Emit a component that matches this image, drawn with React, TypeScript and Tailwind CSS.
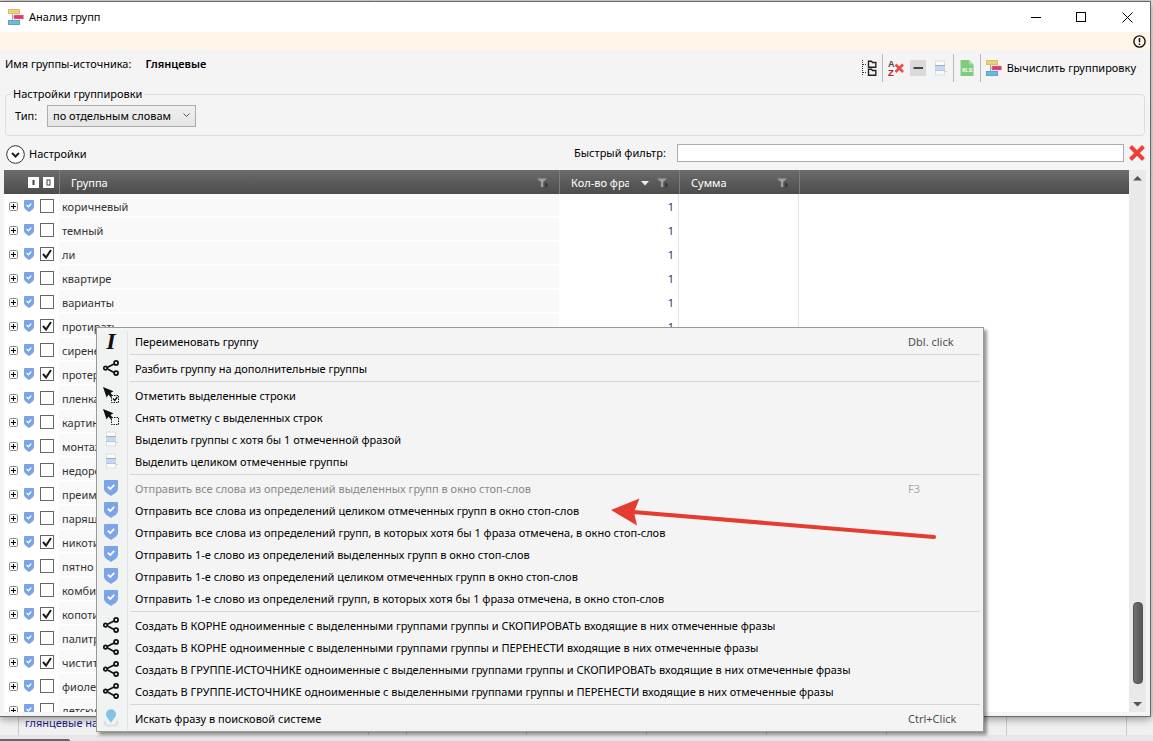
import { useState } from 'react';
import type { ReactNode } from 'react';

interface Group {
  name: string;
  checked?: boolean;
}

interface MenuEntry {
  icon: ReactNode;
  label: string;
  shortcut?: string;
  disabled?: boolean;
}

const groups: Group[] = [
  { name: 'коричневый' },
  { name: 'темный' },
  { name: 'ли', checked: true },
  { name: 'квартире' },
  { name: 'варианты' },
  { name: 'протирать', checked: true },
  { name: 'сиреневый' },
  { name: 'протереть', checked: true },
  { name: 'пленка' },
  { name: 'картинки' },
  { name: 'монтаж' },
  { name: 'недорого' },
  { name: 'преимущества' },
  { name: 'парящие' },
  { name: 'никотина', checked: true },
  { name: 'пятно' },
  { name: 'комбинированные' },
  { name: 'копоти', checked: true },
  { name: 'палитра' },
  { name: 'чистить', checked: true },
  { name: 'фиолетовый' },
  { name: 'детскую' },
];

function GroupingIcon() {
  return (
    <svg width="16" height="16" viewBox="0 0 16 16" aria-hidden="true">
      <path d="M4.500 4v8M4.500 8H8" stroke="#a9a9a9" fill="none" />
      <rect x="0.500" y="0.500" width="11" height="4" fill="#e8d37c" stroke="#d9c067" />
      <rect x="6" y="6" width="9.500" height="4" fill="#e8336f" stroke="#b9a0aa" strokeWidth="0.500" />
      <rect x="0.500" y="11.500" width="11" height="4" fill="#6cb9d8" stroke="#5aa6c6" />
    </svg>
  );
}

function ShieldIcon({ className = 'w-[14px] h-4' }: { className?: string }) {
  return (
    <svg className={className} viewBox="0 0 14 16" preserveAspectRatio="none" aria-hidden="true">
      <path d="M1 0h12q1 0 1 1v7.500C14 12 10.500 13.500 7 16 3.500 13.500 0 12 0 8.500V1Q0 0 1 0Z" fill="#7ba5e8" />
      <path d="M3.800 6.800 6.300 9 10.200 4.800" stroke="#fff" strokeWidth="1.800" fill="none" />
    </svg>
  );
}

function ShareIcon() {
  return (
    <svg width="16" height="16" viewBox="0 0 16 16" fill="none" stroke="#111" strokeWidth="1.700" aria-hidden="true">
      <path d="M4.600 7.200 11 4M4.600 9 11 12.400" />
      <circle cx="2.500" cy="8.100" r="1.700" />
      <circle cx="13.100" cy="2.900" r="2" />
      <circle cx="13.100" cy="13.100" r="2" />
    </svg>
  );
}

function PointerIcon({ check }: { check?: boolean }) {
  return (
    <svg width="16" height="16" viewBox="0 0 16 16" aria-hidden="true">
      <path d="M0 0 10.500 4.200 7.500 6 10 9 8 10.800 5.500 7.500 3.600 10.500Z" fill="#111" />
      <rect x="8.500" y="8.500" width="7" height="7" fill="#f4f4f4" stroke="#111" strokeDasharray="1.500 1" />
      {check && <path d="M10 11.500 11.800 13.500 14.300 10" stroke="#111" strokeWidth="1.300" fill="none" />}
    </svg>
  );
}

function RowsIcon() {
  return (
    <svg width="16" height="16" viewBox="0 0 16 16" aria-hidden="true">
      <rect x="3.500" y="1" width="9" height="14" fill="#fbfbfb" stroke="#dedede" />
      <rect x="3" y="5" width="10" height="6" fill="#c3d7f9" />
      <path d="M3 5.500h10" stroke="#a9a9b5" />
      <path d="M3 10.500h10" stroke="#b8c4dc" />
      <path d="M13 11.500h2" stroke="#cfcfcf" />
    </svg>
  );
}

function PinIcon() {
  return (
    <svg width="16" height="18" viewBox="0 0 16 18" aria-hidden="true">
      <path d="M3 12.500C0 14 1 16.800 8 16.800s8-2.800 5-4.300" stroke="#dcdfdf" strokeWidth="2" fill="none" />
      <path d="M8 14C6.500 10.500 3 8.500 3 5.200a5 5 0 0 1 10 0C13 8.500 9.500 10.500 8 14Z" fill="#82c2e6" />
    </svg>
  );
}

function TreeIcon() {
  return (
    <svg width="16" height="16" viewBox="0 0 16 16" fill="none" aria-hidden="true">
      <path d="M1.500 0v16" stroke="#333" strokeDasharray="1 1" />
      <path d="M2 4.500h4M2 12.500h4" stroke="#333" strokeDasharray="1 1" />
      <path d="M7.500 7.200V1.200h3l1 1.300h3.300v4.700ZM7.500 15.200V9.200h3l1 1.300h3.300v4.700Z" stroke="#222" strokeWidth="1.400" />
    </svg>
  );
}

function SortClearIcon() {
  return (
    <svg width="16" height="16" viewBox="0 0 16 16" aria-hidden="true">
      <text x="0" y="7" fontSize="9" fontWeight="700" fontFamily="Liberation Sans, sans-serif" fill="#444">A</text>
      <text x="0" y="15.500" fontSize="9.500" fontWeight="700" fontFamily="Liberation Sans, sans-serif" fill="#b3202a">Z</text>
      <path d="M7.500 4.500 15 12M15 4.500 7.500 12" stroke="#ee4b44" strokeWidth="2.600" />
    </svg>
  );
}

function CollapseIcon() {
  return (
    <svg width="16" height="16" viewBox="0 0 16 16" aria-hidden="true">
      <rect width="16" height="16" rx="1.500" fill="#dadada" />
      <path d="M3.500 8h9.500" stroke="#444" strokeWidth="2" />
    </svg>
  );
}

function XlsIcon() {
  return (
    <svg width="16" height="16" viewBox="0 0 16 16" aria-hidden="true">
      <path d="M1.500 0H10l4.500 4.500V16h-13Z" fill="#7fcc80" />
      <path d="M10 0v4.500h4.500Z" fill="#b2ddb3" />
      <text x="8" y="12" textAnchor="middle" fontSize="5.500" fontWeight="700" fontFamily="Liberation Sans, sans-serif" fill="#fff">XLS</text>
    </svg>
  );
}

function FilterIcon() {
  return (
    <svg width="12" height="11" viewBox="0 0 12 11" aria-hidden="true">
      <path d="M0 0.500h10L6.200 4v5H4V4Z" fill="#a0a0a0" />
      <path d="M8 3.500 11.500 7 8 10.500Z" fill="#3a3a3a" />
    </svg>
  );
}

const rename = (
  <span className="font-['Liberation_Serif',serif] text-[24px] leading-4 font-bold italic text-[#111]">I</span>
);

const sections: MenuEntry[][] = [
  [{ icon: rename, label: 'Переименовать группу', shortcut: 'Dbl. click' }],
  [{ icon: <ShareIcon />, label: 'Разбить группу на дополнительные группы' }],
  [
    { icon: <PointerIcon check />, label: 'Отметить выделенные строки' },
    { icon: <PointerIcon />, label: 'Снять отметку с выделенных строк' },
    { icon: <RowsIcon />, label: 'Выделить группы с хотя бы 1 отмеченной фразой' },
    { icon: <RowsIcon />, label: 'Выделить целиком отмеченные группы' },
  ],
  [
    { icon: <ShieldIcon />, label: 'Отправить все слова из определений выделенных групп в окно стоп-слов', shortcut: 'F3', disabled: true },
    { icon: <ShieldIcon />, label: 'Отправить все слова из определений целиком отмеченных групп в окно стоп-слов' },
    { icon: <ShieldIcon />, label: 'Отправить все слова из определений групп, в которых хотя бы 1 фраза отмечена, в окно стоп-слов' },
    { icon: <ShieldIcon />, label: 'Отправить 1-е слово из определений выделенных групп в окно стоп-слов' },
    { icon: <ShieldIcon />, label: 'Отправить 1-е слово из определений целиком отмеченных групп в окно стоп-слов' },
    { icon: <ShieldIcon />, label: 'Отправить 1-е слово из определений групп, в которых хотя бы 1 фраза отмечена, в окно стоп-слов' },
  ],
  [
    { icon: <ShareIcon />, label: 'Создать В КОРНЕ одноименные с выделенными группами группы и СКОПИРОВАТЬ входящие в них отмеченные фразы' },
    { icon: <ShareIcon />, label: 'Создать В КОРНЕ одноименные с выделенными группами группы и ПЕРЕНЕСТИ входящие в них отмеченные фразы' },
    { icon: <ShareIcon />, label: 'Создать В ГРУППЕ-ИСТОЧНИКЕ одноименные с выделенными группами группы и СКОПИРОВАТЬ входящие в них отмеченные фразы' },
    { icon: <ShareIcon />, label: 'Создать В ГРУППЕ-ИСТОЧНИКЕ одноименные с выделенными группами группы и ПЕРЕНЕСТИ входящие в них отмеченные фразы' },
  ],
  [{ icon: <PinIcon />, label: 'Искать фразу в поисковой системе', shortcut: 'Ctrl+Click' }],
];

function TitleBar() {
  return (
    <header className="flex h-[30px] shrink-0 items-center bg-white pl-2">
      <GroupingIcon />
      <h1 className="ml-[5px] flex-1">Анализ групп</h1>
      <button aria-label="Свернуть" className="grid h-full w-[45px] place-items-center">
        <svg width="11" height="11" stroke="#000"><path d="M0 5.500h10" /></svg>
      </button>
      <button aria-label="Развернуть" className="grid h-full w-[45px] place-items-center">
        <svg width="11" height="11" stroke="#000" fill="none"><rect x="0.500" y="0.500" width="9" height="9" /></svg>
      </button>
      <button aria-label="Закрыть" className="grid h-full w-[46px] place-items-center">
        <svg width="11" height="11" stroke="#000"><path d="M0.500 0.500l10 10M10.500 0.500l-10 10" /></svg>
      </button>
    </header>
  );
}

function Divider() {
  return <span className="h-7 w-px bg-[#b9b9b9]" />;
}

function Toolbar() {
  return (
    <div className="mt-1 flex h-7 items-center gap-[5px]">
      <button aria-label="Дерево"><TreeIcon /></button>
      <Divider />
      <button aria-label="Сбросить сортировку"><SortClearIcon /></button>
      <button aria-label="Свернуть все" className="px-px"><CollapseIcon /></button>
      <button aria-label="Выделить строки"><RowsIcon /></button>
      <Divider />
      <button aria-label="Экспорт в XLS"><XlsIcon /></button>
      <Divider />
      <button className="flex items-center gap-[5px]">
        <GroupingIcon />
        Вычислить группировку
      </button>
    </div>
  );
}

function GroupRow({ name, checked }: Group) {
  const [on, setOn] = useState(Boolean(checked));
  return (
    <tr className="h-6">
      <td className="p-0">
        <div className="flex items-center gap-1.5 pl-[5px]">
          <button aria-label="Развернуть группу">
            <svg width="9" height="9" viewBox="0 0 9 9" fill="none">
              <rect x="0.500" y="0.500" width="8" height="8" rx="1" fill="#f7f7f7" stroke="#8c8c8c" />
              <path d="M2 4.500h5M4.500 2v5" stroke="#000" />
            </svg>
          </button>
          <ShieldIcon className="h-3 w-2.5" />
          <span className="relative grid">
            <input
              type="checkbox"
              aria-label={name}
              checked={on}
              onChange={() => setOn(!on)}
              className="size-[14px] appearance-none border border-[#666] bg-white"
            />
            {on && (
              <svg className="pointer-events-none absolute inset-0" width="14" height="14" viewBox="0 0 14 14">
                <path d="M3 7l3 3.500L11 3" stroke="#1c1c1c" strokeWidth="2" fill="none" />
              </svg>
            )}
          </span>
        </div>
      </td>
      <td className="border-b-2 border-white bg-[#f9f9f9] p-0 pt-1 pl-[3px] text-[#333]">{name}</td>
      <td className="border-r border-[#e6e6e6] p-0 pt-0.5 pr-1 text-right text-[#33336b]">1</td>
      <td className="border-r border-[#e6e6e6] p-0" />
      <td className="p-0" />
    </tr>
  );
}

const headCell = 'border-l border-[#7e7e7e] p-0 pt-0.5 pl-[11px] text-left font-normal';

function GroupsTable() {
  return (
    <div className="min-w-0 flex-1 overflow-hidden bg-white">
      <table className="w-full table-fixed border-separate border-spacing-0">
        <colgroup>
          <col className="w-[55px]" />
          <col className="w-[500px]" />
          <col className="w-[120px]" />
          <col className="w-[120px]" />
          <col />
        </colgroup>
        <thead>
          <tr className="h-6 bg-linear-to-b from-[#6c6c6c] to-[#4c4c4c] text-white">
            <th className="p-0">
              <div className="flex gap-1 pl-6">
                <svg width="11" height="11"><rect width="11" height="11" fill="#fff" /><path d="M5.500 3v5" stroke="#444" strokeWidth="2" /></svg>
                <svg width="11" height="11"><rect width="11" height="11" fill="#fff" /><rect x="4" y="3" width="3" height="5" fill="none" stroke="#444" /></svg>
              </div>
            </th>
            <th className={headCell}>
              <div className="flex items-center justify-between pr-2.5">Группа<FilterIcon /></div>
            </th>
            <th className={headCell}>
              <div className="flex items-center pr-2.5">
                <span className="w-[58px] overflow-hidden whitespace-nowrap">Кол-во фраз</span>
                <svg className="ml-3" width="8" height="5"><path d="M0 0h8L4 4.500Z" fill="#eee" /></svg>
                <span className="ml-auto"><FilterIcon /></span>
              </div>
            </th>
            <th className={headCell}>
              <div className="flex items-center justify-between pr-2.5">Сумма<FilterIcon /></div>
            </th>
            <th className={headCell} />
          </tr>
        </thead>
        <tbody>
          {groups.map((g) => (
            <GroupRow key={g.name} {...g} />
          ))}
        </tbody>
      </table>
    </div>
  );
}

function Scrollbar() {
  return (
    <div className="flex w-[17px] flex-col items-center bg-[#e9e9e9]">
      <button aria-label="Вверх" className="grid h-4 place-items-center">
        <svg width="9" height="5"><path d="M0 4.500 4.500 0 9 4.500Z" fill="#555" /></svg>
      </button>
      <div className="flex-1" />
      <div className="h-[82px] w-2.5 rounded-sm border border-[#555] bg-linear-to-r from-[#707070] to-[#565656]" />
      <div className="h-3" />
      <button aria-label="Вниз" className="grid h-4 place-items-center">
        <svg width="9" height="5"><path d="M0 0h9L4.500 4.500Z" fill="#555" /></svg>
      </button>
    </div>
  );
}

function ContextMenu() {
  return (
    <div
      role="menu"
      className="absolute top-[327px] left-24 w-[888px] border border-[#999] bg-[#f4f4f4] pt-[3px] pb-px shadow-[3px_3px_3px_rgba(0,0,0,0.4)]"
    >
      {sections.map((items, i) => (
        <div key={items[0].label}>
          {i > 0 && (
            <div className="flex h-[5px]">
              <span className="w-[31px] border-r border-[#dfe3e3] bg-[#f0f3f2]" />
              <span className="mt-px mr-[3px] ml-0.5 h-px flex-1 bg-[#d5d5d5]" />
            </div>
          )}
          {items.map((item) => (
            <button
              key={item.label}
              role="menuitem"
              disabled={item.disabled}
              className="flex h-[22px] w-full items-center text-left disabled:text-[#888]"
            >
              <span className="grid h-full w-[31px] place-items-center border-r border-[#dfe3e3] bg-[#f0f3f2] pr-0.5 pb-0.5">
                {item.icon}
              </span>
              <span className="flex-1 pl-[7px] whitespace-nowrap">{item.label}</span>
              {item.shortcut && <span className="w-[75px] opacity-70">{item.shortcut}</span>}
            </button>
          ))}
        </div>
      ))}
    </div>
  );
}

// Columns of the main window's grid that show from under the dialog
function GridStrip({ children }: { children?: ReactNode }) {
  return (
    <div className="flex h-full *:shrink-0 *:border-r *:border-[#c9c9c9]">
      <span className="w-[19px]" />
      <span className="w-[350px] overflow-hidden pl-1.5 leading-3 whitespace-nowrap text-[#1d1d86]">{children}</span>
      <span className="w-[38px]" />
      <span className="w-[120px]" />
      <span className="w-[120px]" />
      <span className="w-[120px]" />
      <span className="w-[120px]" />
      <span className="w-[120px]" />
      <span className="w-[120px]" />
    </div>
  );
}

export default function App() {
  return (
    <div className="relative flex h-screen flex-col overflow-hidden bg-[#e9e9e9] font-['Noto_Sans',sans-serif] text-[11px] leading-4 text-black">
      <div className="h-px shrink-0 overflow-hidden bg-[#dcdcdc]"><GridStrip /></div>

      <main className="z-10 mr-0.5 flex min-h-0 flex-1 flex-col border-t border-r border-b border-[#6a6a6a] bg-[#f4f4f4] shadow-[0_2px_8px_rgba(0,0,0,0.4)]">
        <TitleBar />
        <div className="flex h-[18px] shrink-0 items-center justify-end bg-[#fff5e8] pr-1">
          <svg width="13" height="13" viewBox="0 0 13 13" fill="none" stroke="#111" aria-hidden="true">
            <circle cx="6.500" cy="6.500" r="5.600" strokeWidth="1.400" />
            <path d="M6.500 3v4.200M6.500 8.500v1.500" strokeWidth="1.500" />
          </svg>
        </div>

        <div className="flex h-9 shrink-0 items-start justify-between pr-3.5 pl-[5px]">
          <p className="flex h-7 items-center gap-3.5">
            Имя группы-источника: <b className="font-semibold">Глянцевые</b>
          </p>
          <Toolbar />
        </div>

        <fieldset className="mr-[5px] ml-[5px] shrink-0 rounded-sm border border-[#d5dfe5] px-[9px] pb-2">
          <legend className="-ml-1 px-0.5">Настройки группировки</legend>
          <div className="flex items-center pt-[3px]">
            <label htmlFor="type" className="w-8">Тип:</label>
            <span className="relative">
              <select
                id="type"
                className="block h-[22px] w-[149px] appearance-none border border-[#acacac] bg-linear-to-b from-[#f0f0f0] to-[#e5e5e5] pl-[5px]"
              >
                <option>по отдельным словам</option>
              </select>
              <svg className="pointer-events-none absolute top-2 right-1.5" width="7" height="5" fill="none" stroke="#555">
                <path d="M0.500 0.500l3 3 3-3" />
              </svg>
            </span>
          </div>
        </fieldset>

        <div className="flex h-[34px] shrink-0 items-center pr-[5px] pl-1.5">
          <button className="flex w-[568px] items-center gap-1 pt-0.5">
            <svg width="19" height="19" viewBox="0 0 19 19" fill="none">
              <circle cx="9.500" cy="9.500" r="8.800" fill="#fff" stroke="#333" />
              <path d="M6 8l3.500 3.500L13 8" stroke="#222" strokeWidth="2" />
            </svg>
            Настройки
          </button>
          <label htmlFor="filter" className="w-[103px]">Быстрый фильтр:</label>
          <input id="filter" type="text" className="h-[18px] min-w-0 flex-1 border border-[#abadb3] bg-white px-1" />
          <button aria-label="Очистить фильтр" className="ml-[5px]">
            <svg width="16" height="16" viewBox="0 0 16 16">
              <path d="M1.500 1.500l13 13M14.500 1.500l-13 13" stroke="#ee3f3a" strokeWidth="4" />
            </svg>
          </button>
        </div>

        <div className="mr-1 mb-1 ml-1 flex min-h-0 flex-1">
          <GroupsTable />
          <Scrollbar />
        </div>
      </main>

      <div className="h-[18px] shrink-0 bg-[#f0f0f0]"><GridStrip>глянцевые натяжные потолки</GridStrip></div>
      <div className="flex h-1.5 shrink-0 items-end bg-[#e6e6e6]">
        <span className="h-0.5 w-[70px] rounded-tr-sm bg-[#666]" />
      </div>

      <div className="contents *:z-20">
        <ContextMenu />
        <svg className="pointer-events-none absolute top-[494px] left-[608px]" width="330" height="50" viewBox="0 0 330 50" aria-hidden="true">
          <path d="M25 18 326 43" stroke="#e63b30" strokeWidth="4" strokeLinecap="round" />
          <path d="M3 16 31.500 4.500 26 18 29 31.500Z" fill="#e63b30" />
        </svg>
      </div>
    </div>
  );
}
